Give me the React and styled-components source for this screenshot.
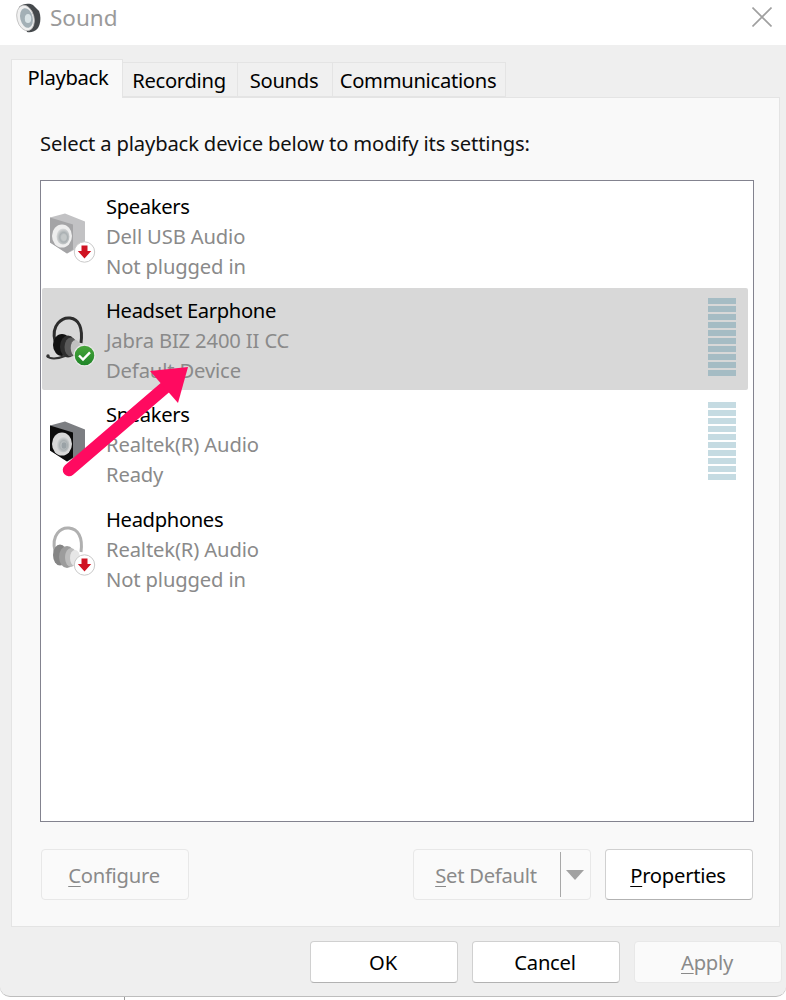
import React from "react";
import styled, { createGlobalStyle } from "styled-components";

const Global = createGlobalStyle`
  html, body { margin: 0; padding: 0; background: #fff; }
  body { font-family: "Noto Sans", "Open Sans", sans-serif; width: 786px; height: 1000px; overflow: hidden; }
`;

const Page = styled.div`
  position: relative;
  width: 786px;
  height: 1000px;
  background: #fff;
  overflow: hidden;
`;

const Backdrop = styled.div`
  height: 3px;
  margin-left: 124px;
  width: 1px;
  background: #9a9a9a;
`;

const Window = styled.div`
  height: 997px;
  box-sizing: border-box;
  display: flex;
  flex-direction: column;
  background: #efefef;
  border-bottom: 1px solid #bdbdbd;
  border-radius: 0 0 10px 10px;
  overflow: hidden;
`;

const TitleBar = styled.header`
  height: 45px;
  flex: none;
  background: #fff;
  display: flex;
  align-items: center;
  padding: 0 14px 0 15px;
  gap: 8px;
`;

const TitleText = styled.span`
  font-size: 22.5px;
  color: #9a9a9a;
  flex: 1;
  margin-top: -10px;
  margin-left: 1px;
`;

const TitleIconSlot = styled.span`
  display: flex;
  margin-top: -10px;
`;

const Close = styled.span`
  display: flex;
  margin: -11px 0 0 0;
`;

const Content = styled.div`
  flex: 1;
  display: flex;
  flex-direction: column;
  padding: 14px 6px 0 11px;
`;

const Tabs = styled.nav`
  display: flex;
  align-items: flex-start;
  height: 38px;
  flex: none;
`;

const Tab = styled.div`
  box-sizing: border-box;
  width: ${(p) => p.$w}px;
  height: ${(p) => (p.$active ? 39 : 35)}px;
  margin-top: ${(p) => (p.$active ? 0 : 3)}px;
  display: flex;
  align-items: center;
  justify-content: center;
  font-size: 20.2px;
  letter-spacing: -0.3px;
  color: #000;
  background: ${(p) => (p.$active ? "#f9f9f9" : "#f0f0f0")};
  border: 1px solid #e4e4e4;
  border-left-width: ${(p) => (p.$active ? 1 : 0)}px;
  border-bottom-width: ${(p) => (p.$active ? 0 : 1)}px;
  position: relative;
  z-index: ${(p) => (p.$active ? 1 : 0)};
  padding: ${(p) => (p.$active ? "0 0 4px 2px" : "1px 2px 0 0")};
`;

const Panel = styled.section`
  box-sizing: border-box;
  height: 830px;
  flex: none;
  background: #f9f9f9;
  border: 1px solid #e4e4e4;
  padding: 29px 25px 26px 28px;
  display: flex;
  flex-direction: column;
`;

const Instruction = styled.p`
  margin: 0;
  font-size: 20.2px;
  letter-spacing: -0.15px;
  line-height: 32px;
  height: 53px;
  color: #111;
`;

const DeviceList = styled.ul`
  box-sizing: border-box;
  list-style: none;
  margin: 0;
  height: 642px;
  flex: none;
  background: #fff;
  border: 1px solid #83838f;
  padding: 3px 5px 0 1px;
  display: flex;
  flex-direction: column;
  gap: 2px;
`;

const Device = styled.li`
  height: 102px;
  flex: none;
  display: flex;
  align-items: center;
  background: ${(p) => (p.$selected ? "#d8d8d8" : "transparent")};
  border-radius: 2px;
  &:last-child {
    margin-top: 1px;
  }
`;

const DeviceIcon = styled.svg`
  width: 56px;
  height: 56px;
  margin-left: 2px;
  flex: none;
`;

const DeviceText = styled.div`
  margin-left: 6px;
  padding-top: 2px;
  flex: 1;
  display: flex;
  flex-direction: column;
`;

const DeviceName = styled.span`
  font-size: 20.2px;
  letter-spacing: -0.35px;
  line-height: 30px;
  color: #000;
`;

const DeviceDetail = styled.span`
  font-size: 20.2px;
  letter-spacing: -0.14px;
  line-height: 30px;
  color: #8a8a8a;
`;

const Meter = styled.div`
  width: 28px;
  height: 78px;
  margin: 0 12px 14px 0;
  align-self: flex-end;
  display: flex;
  flex-direction: column;
  gap: 1.55px;
`;

const MeterBar = styled.span`
  flex: 1;
  background: ${(p) => p.$color};
`;

const ActionRow = styled.div`
  display: flex;
  margin-top: 27px;
  padding-left: 1px;
  padding-right: 1px;
`;

const Button = styled.button`
  box-sizing: border-box;
  width: ${(p) => p.$w || 148}px;
  height: ${(p) => p.$h || 51}px;
  padding: 0 2px 0 0;
  font: inherit;
  font-family: "Noto Sans", "Open Sans", sans-serif;
  font-size: 20.2px;
  letter-spacing: -0.25px;
  border-radius: 4px;
  color: ${(p) => (p.disabled ? "#8a8a8a" : "#000")};
  background: ${(p) => (p.disabled ? "#fafafa" : "#fff")};
  border: 1px solid ${(p) => (p.disabled ? "#e8e8e8" : "#d0d0d0")};
  border-bottom-color: ${(p) => (p.disabled ? "#e8e8e8" : "#b2b2b2")};
`;

const SplitButton = styled.div`
  box-sizing: border-box;
  width: 178px;
  height: 51px;
  margin-left: auto;
  display: flex;
  align-items: center;
  background: #fafafa;
  border: 1px solid #e8e8e8;
  border-radius: 4px;
  font-size: 20.2px;
  letter-spacing: -0.25px;
  color: #8a8a8a;
`;

const SplitLabel = styled.span`
  width: 146px;
  padding-right: 2px;
  box-sizing: border-box;
  text-align: center;
`;

const SplitDivider = styled.span`
  width: 1px;
  height: 45px;
  background: #a8a8a8;
`;

const Caret = styled.span`
  width: 0;
  height: 0;
  margin-left: 5px;
  border-left: 9.5px solid transparent;
  border-right: 9.5px solid transparent;
  border-top: 10px solid #a2a2a2;
`;

const RightGap = styled.span`
  width: 14px;
  flex: none;
`;

const Footer = styled.footer`
  display: flex;
  gap: 14px;
  justify-content: flex-end;
  padding: 14px 0 0 0;
  margin-right: -2px;
`;

const ArrowOverlay = styled.svg`
  position: absolute;
  left: 0;
  top: 0;
  pointer-events: none;
`;

const Access = styled.u`
  text-underline-offset: 3px;
  text-decoration-thickness: 1px;
`;

const Defs = () => (
  <svg width="0" height="0" style={{ position: "absolute" }}>
    <defs>
      <radialGradient id="cone" cx="0.55" cy="0.55" r="0.6">
        <stop offset="0" stopColor="#dfe3e4" />
        <stop offset="0.5" stopColor="#aab0b2" />
        <stop offset="1" stopColor="#e4e4e4" />
      </radialGradient>
      <linearGradient id="greenB" x1="0" y1="0" x2="0" y2="1">
        <stop offset="0" stopColor="#4aa63c" />
        <stop offset="1" stopColor="#1d8427" />
      </linearGradient>
    </defs>
  </svg>
);

const DownBadge = ({ cx, cy }) => (
  <g>
    <circle cx={cx} cy={cy} r="10.2" fill="#fff" stroke="#c9c9c9" strokeWidth="1" />
    <path
      d={`M${cx - 3} ${cy - 6.5} h6 v5.5 h3.7 L${cx} ${cy + 6.5} L${cx - 6.7} ${cy - 1} h3.7 z`}
      fill="#cf1322"
    />
  </g>
);

const SpeakerIcon = ({ dark }) => (
  <DeviceIcon viewBox="0 0 56 56">
    <g transform="translate(0 1.5)">
      <path d="M6 9 L21 5 L41 13 L41 36 L23 45 L6 34 Z" fill={dark ? "#7c7e82" : "#c2c2c4"} />
      <path d="M6 9 L29 16 L29 41 L23 45 L6 34 Z" fill={dark ? "#0c0c0c" : "#a4a4a6"} />
      <ellipse cx="18" cy="27.5" rx="10" ry="11.5" fill={dark ? "#d8d8d8" : "#eeeeee"} />
      <ellipse cx="19" cy="28" rx="6.5" ry="8" fill="url(#cone)" />
      <ellipse cx="20" cy="29" rx="2.5" ry="3.2" fill={dark ? "#9aa2a6" : "#c4c8c8"} />
    </g>
    {!dark && <DownBadge cx={40.5} cy={45} />}
  </DeviceIcon>
);

const HeadsetIcon = () => (
  <DeviceIcon viewBox="0 0 56 56">
    <g transform="translate(0 3)">
      <path d="M11 27 C7 11 18 3 26 4 C35 5 39 14 37 29" fill="none" stroke="#2d2d2d" strokeWidth="3" />
      <ellipse cx="18" cy="31" rx="9" ry="11" fill="#111" />
      <ellipse cx="24" cy="32.5" rx="8" ry="11" fill="#2e2e2e" />
      <ellipse cx="27" cy="33" rx="6.5" ry="9.5" fill="#5a5a5a" />
      <ellipse cx="31.5" cy="34" rx="4.8" ry="8" fill="#c0c0c0" />
      <path d="M3 42 C7 46 13 45 21 42" fill="none" stroke="#333" strokeWidth="2" />
      <circle cx="4" cy="42" r="1.7" fill="#333" />
      <circle cx="40.5" cy="41.5" r="10.4" fill="url(#greenB)" stroke="#e8e8e8" strokeWidth="1.2" />
      <path d="M35 41.5 L39 45.5 L46 38.3" fill="none" stroke="#fff" strokeWidth="2.4" />
    </g>
  </DeviceIcon>
);

const HeadphonesIcon = () => (
  <DeviceIcon viewBox="0 0 56 56">
    <g transform="translate(0 4)">
      <path d="M11 27 C7 11 17 3 25 4 C34 5 39 13 37 28" fill="none" stroke="#b0b0b0" strokeWidth="3" />
      <ellipse cx="16" cy="31" rx="7" ry="10.5" fill="#858585" />
      <ellipse cx="23" cy="33" rx="8" ry="11" fill="#9c9c9c" />
      <ellipse cx="27" cy="33.5" rx="6" ry="9.5" fill="#bdbdbd" />
      <ellipse cx="31" cy="34" rx="5" ry="8" fill="#e6e6e6" />
      <DownBadge cx={40.5} cy={41} />
    </g>
  </DeviceIcon>
);

const Meters = ({ color }) => (
  <Meter>
    {Array.from({ length: 10 }, (_, i) => (
      <MeterBar key={i} $color={color} />
    ))}
  </Meter>
);

const devices = [
  { icon: <SpeakerIcon />, name: "Speakers", detail: "Dell USB Audio", status: "Not plugged in" },
  { icon: <HeadsetIcon />, name: "Headset Earphone", detail: "Jabra BIZ 2400 II CC", status: "Default Device", selected: true, meter: "#a5bcc4" },
  { icon: <SpeakerIcon dark />, name: "Speakers", detail: "Realtek(R) Audio", status: "Ready", meter: "#c5dbe2" },
  { icon: <HeadphonesIcon />, name: "Headphones", detail: "Realtek(R) Audio", status: "Not plugged in" },
];

export default function App() {
  return (
    <Page>
      <Global />
      <Defs />
      <Window>
        <TitleBar>
          <TitleIconSlot>
            <svg width="26" height="30" viewBox="0 0 26 30">
              <path d="M4 4 C8 0 15 0 18 2 L24 8 C26 13 26 20 23 25 C20 29 15 30 12 29 Z" fill="#45494c" />
              <ellipse cx="10.5" cy="15" rx="8.5" ry="13" transform="rotate(-14 10.5 15)" fill="#f0f0f0" stroke="#bcbcbc" strokeWidth="0.8" />
              <ellipse cx="11.5" cy="15" rx="6.2" ry="10" transform="rotate(-14 11.5 15)" fill="#a3b0b6" />
              <ellipse cx="13" cy="15.5" rx="3.2" ry="4.5" fill="#d9e3e6" />
            </svg>
          </TitleIconSlot>
          <TitleText>Sound</TitleText>
          <Close>
            <svg width="20" height="20" viewBox="0 0 20 20">
              <path d="M0.5 0.5 L19.5 19.5 M19.5 0.5 L0.5 19.5" stroke="#a0a0a0" strokeWidth="1.6" />
            </svg>
          </Close>
        </TitleBar>
        <Content>
          <Tabs>
            <Tab $active $w={112}>Playback</Tab>
            <Tab $w={115}>Recording</Tab>
            <Tab $w={95}>Sounds</Tab>
            <Tab $w={173}>Communications</Tab>
          </Tabs>
          <Panel>
            <Instruction>Select a playback device below to modify its settings:</Instruction>
            <DeviceList>
              {devices.map((d, i) => (
                <Device key={i} $selected={d.selected}>
                  {d.icon}
                  <DeviceText>
                    <DeviceName>{d.name}</DeviceName>
                    <DeviceDetail>{d.detail}</DeviceDetail>
                    <DeviceDetail>{d.status}</DeviceDetail>
                  </DeviceText>
                  {d.meter && <Meters color={d.meter} />}
                </Device>
              ))}
            </DeviceList>
            <ActionRow>
              <Button disabled><Access>C</Access>onfigure</Button>
              <SplitButton>
                <SplitLabel><Access>S</Access>et Default</SplitLabel>
                <SplitDivider />
                <Caret />
              </SplitButton>
              <RightGap />
              <Button><Access>P</Access>roperties</Button>
            </ActionRow>
          </Panel>
          <Footer>
            <Button $h={42}>OK</Button>
            <Button $h={42}>Cancel</Button>
            <Button $h={42} disabled><Access>A</Access>pply</Button>
          </Footer>
        </Content>
      </Window>
      <Backdrop />
      <ArrowOverlay width="786" height="1000" viewBox="0 0 786 1000">
        <path d="M69 470 L168 385" stroke="#ff0a60" strokeWidth="12.5" strokeLinecap="round" fill="none" />
        <path d="M188 367 L150 371 L178 403 Z" fill="#ff0a60" />
      </ArrowOverlay>
    </Page>
  );
}
